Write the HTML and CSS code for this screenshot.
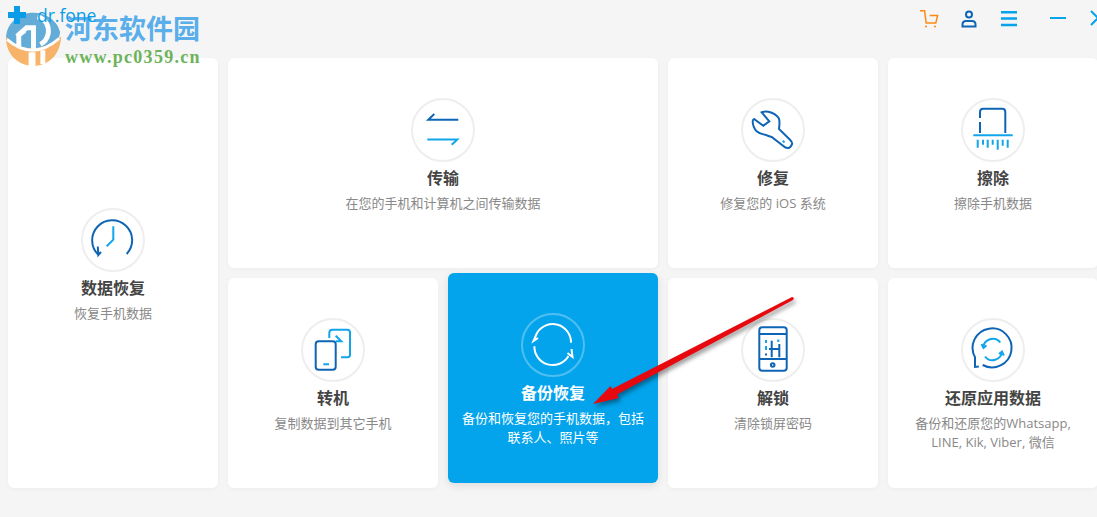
FILE: index.html
```html
<!DOCTYPE html>
<html lang="en">
<head>
  <meta charset="UTF-8" />
  <meta name="viewport" content="width=device-width, initial-scale=1" />
  <title>dr.fone</title>
  <link rel="stylesheet" href="styles.css">
</head>
<body>
  <header class="topbar">
    <div class="brand">
      <span class="brand-cross"></span>
      <span class="brand-name">dr.fone</span>
    </div>
    <div class="tools">
      <svg class="tool cart" viewBox="0 0 20 20"><path d="M1 2.700h4.600l1.600 12.400h9.600l1.800-7.600h-8"/><path d="M6 18.600h2M15 18.600h2"/></svg>
      <svg class="tool user" viewBox="0 0 20 20"><circle cx="10" cy="6.500" r="3"/><path d="M3.500 18.500v-2c0-2 1.500-3.500 3.500-3.500h6c2 0 3.500 1.500 3.500 3.500v2z"/></svg>
      <svg class="tool menu" viewBox="0 0 20 20"><path d="M2 4.300h16M2 10.500h16M2 17h16"/></svg>
      <svg class="tool minimize" viewBox="0 0 20 20"><path d="M2 10h16"/></svg>
      <svg class="tool close" viewBox="0 0 20 20"><path d="M2 3l7 7-7 7M16 3l-7 7 7 7"/></svg>
    </div>
  </header>

  <main class="grid">
    <section class="card card-tall">
      <svg class="icon" viewBox="0 0 64 64">
        <circle class="ring" cx="32" cy="32" r="31"/>
        <path class="dark" d="M17.300 46.700A20 20 0 1 1 45.700 46M16.800 38.500l.5 8.500 2.700-3"/>
        <path class="light" d="M32.300 18.300v13.400l-6.600 6.600"/>
      </svg>
      <h2>数据恢复</h2>
      <p>恢复手机数据</p>
    </section>

    <section class="card card-wide">
      <svg class="icon" viewBox="0 0 64 64">
        <circle class="ring" cx="32" cy="32" r="31"/>
        <path class="dark" d="M47.300 21.700h-30l6-5.700"/>
        <path class="light" d="M16.300 41.400h30l-5.600 5.300"/>
      </svg>
      <h2>传输</h2>
      <p>在您的手机和计算机之间传输数据</p>
    </section>

    <section class="card">
      <svg class="icon" viewBox="0 0 64 64">
        <circle class="ring" cx="32" cy="32" r="31"/>
        <path class="dark" d="M20.700 14.300c2-.8 4.500-1 6.600-.6 4.500 1 8.400 3.300 10.400 6.300 1.200 2.500 1 5.500.3 11l11 10.700c2 2 2.600 3.300 2 4.500-.8 2-2 3.800-3.700 3.800-1.700.2-3.500-.5-5-2L30.700 39c-2.300-.5-4.500-1.300-6.700-2.300-3.200-.5-6.300-1.400-8.300-3.400-2.500-2.500-4-6.500-4-10 0-1 .5-1.800 1.300-2.300l9.300 6.700 6-4.400z"/>
        <path class="light" d="M41.700 42.700l1.800 1.700"/>
      </svg>
      <h2>修复</h2>
      <p>修复您的 iOS 系统</p>
    </section>

    <section class="card">
      <svg class="icon" viewBox="0 0 64 64">
        <circle class="ring" cx="32" cy="32" r="31"/>
        <path class="dark" d="M19 20v-6c0-2 1.300-3.300 3.300-3.300h19c2 0 3 1.300 3 3.300v21M19 24v11"/>
        <path class="light" d="M12.300 37.300h39.400M16.700 41.700v8M22 41.700v5M26.700 41.700v8M31.700 41.700v5M36.700 41.700v10M41.700 41.700v6M46.700 41.700v8"/>
      </svg>
      <h2>擦除</h2>
      <p>擦除手机数据</p>
    </section>

    <section class="card">
      <svg class="icon" viewBox="0 0 64 64">
        <circle class="ring" cx="32" cy="32" r="31"/>
        <rect class="dark" x="14.700" y="23.300" width="20" height="28.400" rx="3"/>
        <path class="light" d="M22.300 46.300H28M28.300 20v-5c0-2 1.400-3.300 3-3.300h15c1.700 0 2.700 1 2.700 2.600v22.400c0 1.600-1 2.600-2.700 2.600H40M34.700 17.700l5.600 5.600h-5.600"/>
      </svg>
      <h2>转机</h2>
      <p>复制数据到其它手机</p>
    </section>

    <section class="card card-active">
      <svg class="icon" viewBox="0 0 64 64">
        <circle class="ring" cx="32" cy="32" r="31"/>
        <path class="sync" d="M16 20A18.300 18.300 0 0 1 50 29.700M13.400 33.300A18.300 18.300 0 0 0 47.500 43M16 20l-3.500 8 4.500-3M50.500 36l1 8-5-4"/>
      </svg>
      <h2>备份恢复</h2>
      <p>备份和恢复您的手机数据，包括<br>联系人、照片等</p>
    </section>

    <section class="card">
      <svg class="icon" viewBox="0 0 64 64">
        <circle class="ring" cx="32" cy="32" r="31"/>
        <rect class="dark" x="18.300" y="9.300" width="27.400" height="43.400" rx="3"/>
        <path class="dark" d="M18.300 16h27.400M18.300 41h27.400M30.700 22.700v16.600M38.300 26v13.300M28 31h11M25 35.500v2"/>
        <circle class="dark" cx="31.700" cy="47" r="1.800"/>
        <path class="light" d="M25 22v3M25 28v4M37.300 21.500v2.500"/>
      </svg>
      <h2>解锁</h2>
      <p>清除锁屏密码</p>
    </section>

    <section class="card">
      <svg class="icon" viewBox="0 0 64 64">
        <circle class="ring" cx="32" cy="32" r="31"/>
        <path class="dark" d="M21.700 47A19.500 19.500 0 1 0 14 39.300V49l3.800-.4"/>
        <path class="light" d="M22.300 30a9.500 9.500 0 0 1 17-5.500M41 33.500a9.500 9.500 0 0 1-17 5M20.500 26l2 4 3-2.500M42.800 37.500l-1.800-4-3 2.500"/>
      </svg>
      <h2>还原应用数据</h2>
      <p>备份和还原您的Whatsapp,<br>LINE, Kik, Viber, 微信</p>
    </section>
  </main>

  <!-- site watermark stamped over the shot -->
  <div class="watermark">
    <svg class="wm-logo" viewBox="0 0 58 56">
      <path d="M1 26c-1 16 11 30 28 30s28-14 28-30c-9 9-20 12-30 12S7 34 1 26z" fill="#f7ae5e"/>
      <path d="M1 26a28 26 0 0 1 55-5c0 3-1 6-3 8-8 6-17 9-26 9S7 34 1 26z" fill="#58a6d6"/>
      <path d="M2 29c8 7 17 11 26 11s18-4 27-12" fill="none" stroke="#fff" stroke-width="3"/>
      <path d="M14 36V24l8-7h7v23M12 26l8-6M33 6c9 2 12 10 11 17-1 5-4 9-8 11" fill="none" stroke="#fff" stroke-width="5"/>
      <path d="M24 42h7v14h-7zM36 40h5v14h-5z" fill="#fff"/>
    </svg>
    <div class="wm-text">
      <span class="wm-title">河东软件园</span>
      <span class="wm-url">www.pc0359.cn</span>
    </div>
  </div>

  <svg class="arrow" viewBox="0 0 1097 517">
    <path d="M792 297L612 389l-1.500-3-17.500 18 26-6-2-3.500L793 300c1.500-1 .5-3.500-1-3z"/>
  </svg>
</body>
</html>
```

FILE: styles.css
```css
* {
  box-sizing: border-box;
}

html, body {
  height: 100%;
}

body {
  margin: 0;
  padding: 0 0 0 8px;
  width: 1097px;
  background: #f5f5f5;
  font-family: "Open Sans", "Noto Sans CJK SC", sans-serif;
  overflow: hidden;
  position: relative;
}

.topbar {
  display: flex;
  justify-content: space-between;
  height: 58px;
}

.brand {
  display: flex;
  align-items: flex-start;
  gap: 11px;
  padding-top: 6px;
  position: relative;
  z-index: 2;
}

.brand-cross {
  width: 18px;
  height: 18px;
  background:
    linear-gradient(#0a9ce6, #0a9ce6) center / 6px 100% no-repeat,
    linear-gradient(#0a9ce6, #0a9ce6) center / 100% 6px no-repeat;
}

.brand-name {
  font-size: 17.500px;
  line-height: 18px;
  color: #0a9ce6;
}

.tools {
  display: flex;
  align-items: flex-start;
  padding-top: 8px;
  width: 178px;
  flex: none;
}

.tool {
  width: 20px;
  height: 20px;
  fill: none;
  stroke-width: 2;
  flex: none;
}

.cart {
  stroke: #fb8a13;
  stroke-width: 1.500;
}

.user {
  stroke: #0f65b5;
  margin-left: 19.500px;
}

.menu {
  stroke: #06a3ea;
  stroke-width: 2.500;
  margin-left: 20.500px;
}

.minimize {
  stroke: #06a3ea;
  margin-left: 29px;
}

.close {
  stroke: #06a3ea;
  margin-left: 21px;
}

.grid {
  display: grid;
  grid-template-columns: repeat(5, 210px);
  grid-auto-rows: 210px;
  gap: 10px;
}

.card {
  display: flex;
  flex-direction: column;
  align-items: center;
  padding-top: 40px;
  background: #fff;
  border-radius: 6px;
  box-shadow: 0 1px 4px rgba(0, 0, 0, 0.04);
  text-align: center;
}

.card-tall {
  grid-row: span 2;
  padding-top: 150px;
}

.card-wide {
  grid-column: span 2;
}

.icon {
  width: 64px;
  height: 64px;
  fill: none;
  stroke-width: 2;
  flex: none;
}

.ring {
  stroke: #eeeeee;
}

.dark {
  stroke: #0f65b5;
}

.light {
  stroke: #12a5ec;
}

.sync {
  stroke: #fff;
}

.card h2 {
  margin: 4px 0 0;
  font-size: 16px;
  line-height: 24px;
  font-weight: 700;
  color: #444;
}

.card p {
  margin: 4px 0 0;
  font-size: 13px;
  line-height: 19px;
  color: #888;
}

.card-active {
  background: #03a4ec;
  transform: translateY(-5px);
  box-shadow: 0 3px 8px rgba(0, 0, 0, 0.1);
}

.card-active h2,
.card-active p {
  color: #fff;
}

.card-active .ring {
  stroke: rgba(255, 255, 255, 0.3);
}

.watermark {
  position: absolute;
  left: 5px;
  top: 11px;
  display: flex;
  gap: 3px;
}

.wm-logo {
  width: 57px;
  height: 55px;
  opacity: 0.92;
}

.wm-text {
  display: flex;
  flex-direction: column;
}

.wm-title {
  font-size: 27px;
  line-height: 35px;
  font-weight: 700;
  color: #5aaeea;
}

.wm-url {
  font-family: "Liberation Serif", serif;
  font-size: 18px;
  line-height: 22px;
  font-weight: 700;
  color: #6cb35a;
  letter-spacing: 1.300px;
}

.arrow {
  position: absolute;
  left: 0;
  top: 0;
  width: 1097px;
  height: 517px;
  fill: #e8090f;
  filter: drop-shadow(2px 3px 2px rgba(0, 0, 0, 0.4));
  pointer-events: none;
}
```
